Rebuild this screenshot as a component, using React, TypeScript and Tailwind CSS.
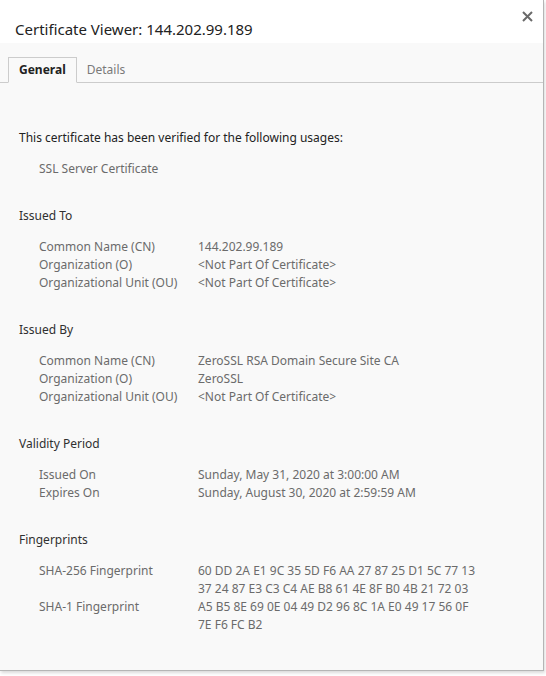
import React from "react";

const font = { fontFamily: '"Noto Sans", "Open Sans", sans-serif' };

function Row({ label, values }: { label: string; values: string[] }) {
  return (
    <div className="flex">
      <div className="w-[159px] shrink-0">{label}</div>
      <div>
        {values.map((v, i) => (
          <div key={i}>{v}</div>
        ))}
      </div>
    </div>
  );
}

function Section({ title, children }: { title: string; children: React.ReactNode }) {
  return (
    <div className="mb-[29px]">
      <div className="text-[#303030]">{title}</div>
      <div className="mt-[13px] pl-[20px] text-[#6b6b6b]">{children}</div>
    </div>
  );
}

export default function App() {
  return (
    <div className="w-[546px] h-[676px] bg-white overflow-hidden" style={font}>
      <div className="w-[544px] h-[671px] border-r border-b border-[#b5b5b5] shadow-[1px_2px_3px_rgba(0,0,0,0.15)] flex flex-col relative">
        <div className="h-[43px] bg-white flex items-end pl-[15px] pb-[4px]">
          <div className="text-[15px] leading-[20px] text-[#222]">Certificate Viewer: 144.202.99.189</div>
        </div>
        <button className="absolute left-[521px] top-[10px] w-[12px] h-[12px] flex items-center justify-center">
          <svg width="11" height="11" viewBox="0 0 11 11">
            <path d="M1 1L10 10M10 1L1 10" stroke="#6a6a6a" strokeWidth="2" />
          </svg>
        </button>
        <div className="flex-1 bg-[#f9f9f9] text-[12px] leading-[18px]">
          <div className="pt-[14px] border-b border-[#cccccc] flex pl-[8px]">
            <div className="h-[26px] -mb-px px-[10px] border border-[#cccccc] border-b-[#f9f9f9] bg-[#f9f9f9] flex items-center font-bold text-[#222]">
              General
            </div>
            <div className="h-[25px] px-[10px] flex items-center text-[#7a7a7a]">Details</div>
          </div>
          <div className="pl-[19px] pt-[46px]">
            <div className="mb-[29px]">
              <div className="text-[#222]">This certificate has been verified for the following usages:</div>
              <div className="mt-[13px] pl-[20px] text-[#6b6b6b]">SSL Server Certificate</div>
            </div>
            <Section title="Issued To">
              <Row label="Common Name (CN)" values={["144.202.99.189"]} />
              <Row label="Organization (O)" values={["<Not Part Of Certificate>"]} />
              <Row label="Organizational Unit (OU)" values={["<Not Part Of Certificate>"]} />
            </Section>
            <Section title="Issued By">
              <Row label="Common Name (CN)" values={["ZeroSSL RSA Domain Secure Site CA"]} />
              <Row label="Organization (O)" values={["ZeroSSL"]} />
              <Row label="Organizational Unit (OU)" values={["<Not Part Of Certificate>"]} />
            </Section>
            <Section title="Validity Period">
              <Row label="Issued On" values={["Sunday, May 31, 2020 at 3:00:00 AM"]} />
              <Row label="Expires On" values={["Sunday, August 30, 2020 at 2:59:59 AM"]} />
            </Section>
            <Section title="Fingerprints">
              <Row
                label="SHA-256 Fingerprint"
                values={["60 DD 2A E1 9C 35 5D F6 AA 27 87 25 D1 5C 77 13", "37 24 87 E3 C3 C4 AE B8 61 4E 8F B0 4B 21 72 03"]}
              />
              <Row label="SHA-1 Fingerprint" values={["A5 B5 8E 69 0E 04 49 D2 96 8C 1A E0 49 17 56 0F", "7E F6 FC B2"]} />
            </Section>
          </div>
        </div>
      </div>
    </div>
  );
}
